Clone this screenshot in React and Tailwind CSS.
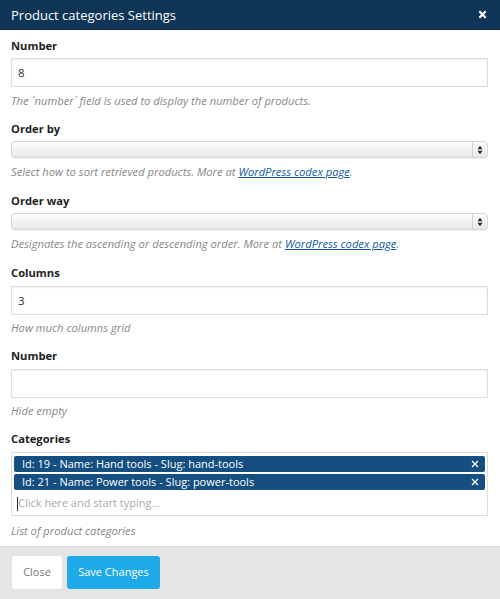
import React from "react";

function Label({ children, mb = "mb-[4px]" }) {
  return <div className={"text-[11.2px] font-bold text-[#222] leading-[16px] " + mb}>{children}</div>;
}
function Help({ children, mt = "mt-[6px]" }) {
  return <div className={"text-[11.2px] italic text-[#888] leading-[16px] " + mt}>{children}</div>;
}
function TextInput({ value }) {
  return (
    <div className="h-[29px] border border-[#dddddd] bg-white flex items-center px-[6px] text-[11.5px] text-[#333] shadow-[inset_0_1px_2px_rgba(0,0,0,0.06)]">
      {value}
    </div>
  );
}
function Select() {
  return (
    <div className="h-[17px] rounded-[4px] border border-[#d6d6d6] bg-gradient-to-b from-[#fdfdfd] to-[#e8e8e8] shadow-[0_1px_1px_rgba(0,0,0,0.06)] flex justify-end items-center">
      <div className="h-full w-[15px] border-l border-[#d0d0d0] flex items-center justify-center">
        <svg width="6" height="10" viewBox="0 0 6 10">
          <path d="M3 0.8 L5.5 4.2 H0.5 Z" fill="#222" />
          <path d="M3 9.2 L5.5 5.8 H0.5 Z" fill="#222" />
        </svg>
      </div>
    </div>
  );
}
function Link({ children }) {
  return <span className="text-[#0e5a9e] underline">{children}</span>;
}
function Tag({ children }) {
  return (
    <div className="h-[16px] bg-[#154e80] rounded-[2px] flex items-center justify-between pl-[8px] pr-[6px] text-white text-[11px] leading-[16px]">
      <span>{children}</span>
      <svg width="8" height="8" viewBox="0 0 8 8"><path d="M1 1 L7 7 M7 1 L1 7" stroke="#fff" strokeWidth="1.3" /></svg>
    </div>
  );
}

export default function App() {
  return (
    <div className="w-[500px] h-[599px] bg-white flex flex-col overflow-hidden" style={{ fontFamily: '"Open Sans", sans-serif' }}>
      <div className="h-[30px] bg-[#0f3557] border-b border-[#0a2540] flex items-center justify-between pl-[11px] pr-[13px] shrink-0">
        <div className="text-white text-[13px] leading-[18px]">Product categories Settings</div>
        <svg width="9" height="9" viewBox="0 0 10 10"><path d="M1.5 1.5 L8.5 8.5 M8.5 1.5 L1.5 8.5" stroke="#fff" strokeWidth="2.4" /></svg>
      </div>
      <div className="flex-1 pl-[11px] pr-[12px] pt-[8px]">
        <Label>Number</Label>
        <TextInput value="8" />
        <Help>The `number` field is used to display the number of products.</Help>
        <div className="h-[12px]" />
        <Label>Order by</Label>
        <Select />
        <Help>Select how to sort retrieved products. More at <Link>WordPress codex page</Link>.</Help>
        <div className="h-[13px]" />
        <Label>Order way</Label>
        <Select />
        <Help>Designates the ascending or descending order. More at <Link>WordPress codex page</Link>.</Help>
        <div className="h-[13px]" />
        <Label mb="mb-[5px]">Columns</Label>
        <TextInput value="3" />
        <Help mt="mt-[5px]">How much columns grid</Help>
        <div className="h-[12px]" />
        <Label mb="mb-[5px]">Number</Label>
        <TextInput value="" />
        <Help mt="mt-[5px]">Hide empty</Help>
        <div className="h-[12px]" />
        <Label mb="mb-[5px]">Categories</Label>
        <div className="h-[64px] border border-[#dddddd] pt-[3px] px-[2px] flex flex-col gap-[2px]">
          <Tag>Id: 19 - Name: Hand tools - Slug: hand-tools</Tag>
          <Tag>Id: 21 - Name: Power tools - Slug: power-tools</Tag>
          <div className="h-[24px] flex items-center text-[11px] text-[#aaa] pl-[3px]">
            <span className="w-px h-[14px] bg-[#333]" />
            Click here and start typing...
          </div>
        </div>
        <Help mt="mt-[7px]">List of product categories</Help>
      </div>
      <div className="h-[53px] bg-[#e5e5e5] border-t border-[#dcdcdc] flex items-start gap-[5px] pl-[12px] pt-[9px] shrink-0">
        <div className="h-[33px] w-[50px] bg-white rounded-[3px] flex items-center justify-center text-[11px] text-[#777]">Close</div>
        <div className="h-[33px] w-[93px] bg-[#1ea9e8] rounded-[3px] flex items-center justify-center text-[11px] text-white">Save Changes</div>
      </div>
    </div>
  );
}
